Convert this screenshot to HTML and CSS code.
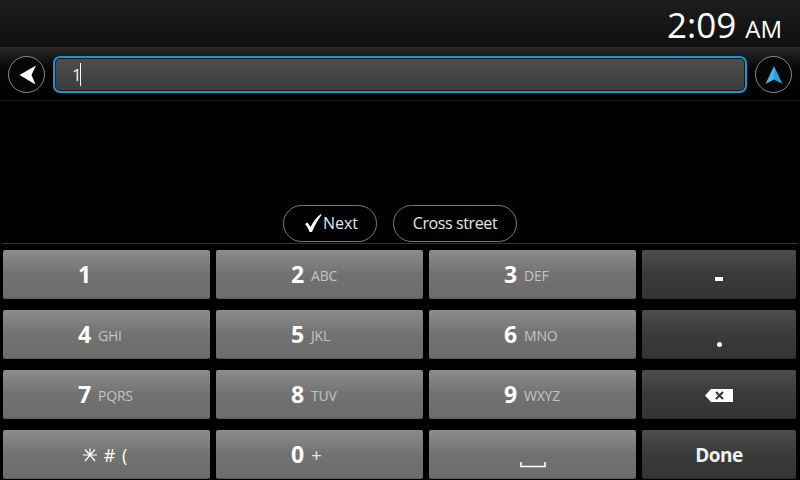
FILE: index.html
```html
<!DOCTYPE html>
<html>

<head lang="en">
    <meta charset="UTF-8">
    <title>Address entry</title>
    <link rel="stylesheet" href="styles.css">
</head>

<body>
    <div class="status-bar">
        <span class="clock">2:09</span>
        <span class="ampm">AM</span>
    </div>

    <div class="search-bar">
        <div class="round-btn">
            <svg width="22" height="22" viewBox="0 0 22 22">
                <path d="M3.5 11 L20 1.5 L15.5 11 L19.5 20.5 Z" fill="#fff"/>
            </svg>
        </div>
        <div class="search-input">
            <span class="search-text">1</span><span class="caret"></span>
        </div>
        <div class="round-btn">
            <svg width="22" height="22" viewBox="0 0 22 22">
                <path d="M11 2 L2.5 20 L11 15.5 Z" fill="#46b6ee"/>
                <path d="M11 2 L19.5 20 L11 15.5 Z" fill="#2f9fdc"/>
            </svg>
        </div>
    </div>

    <div class="results"></div>

    <div class="chips">
        <div class="chip chip-next">
            <svg width="18" height="20" viewBox="0 0 18 20">
                <path d="M1 11 L3.5 9.5 L6.5 14 C9 9 12.5 4 17 1 L17.5 2 C13.5 7 10.5 13 8 19 L5.5 19 C4.5 16 3 13 1 11 Z" fill="#fff"/>
            </svg>
            <span>Next</span>
        </div>
        <div class="chip chip-cross">Cross street</div>
    </div>

    <div class="keypad">
        <div class="key key-num"><b>1</b></div>
        <div class="key key-num"><b>2</b><small>ABC</small></div>
        <div class="key key-num"><b>3</b><small>DEF</small></div>
        <div class="key key-dark key-minus"><i></i></div>

        <div class="key key-num"><b>4</b><small>GHI</small></div>
        <div class="key key-num"><b>5</b><small>JKL</small></div>
        <div class="key key-num"><b>6</b><small>MNO</small></div>
        <div class="key key-dark key-dot"><i></i></div>

        <div class="key key-num"><b>7</b><small>PQRS</small></div>
        <div class="key key-num"><b>8</b><small>TUV</small></div>
        <div class="key key-num"><b>9</b><small>WXYZ</small></div>
        <div class="key key-dark key-back">
            <svg width="28" height="13" viewBox="0 0 28 13">
                <path d="M0 6.5 L6 0 H28 V13 H6 Z" fill="#fff"/>
                <path d="M11 3 L18 10 M18 3 L11 10" stroke="#333" stroke-width="2" fill="none"/>
            </svg>
        </div>

        <div class="key key-symbols">
            <svg width="16" height="14" viewBox="0 0 16 14">
                <path d="M1 7 H15 M8 0.5 V7 M3 1.5 L8 7 L13 1.5 M3 13 L8 7 L13 13" stroke="#fff" stroke-width="1.2" fill="none"/>
            </svg>
            <span># (</span>
        </div>
        <div class="key key-num"><b>0</b><small class="plus">+</small></div>
        <div class="key key-space">
            <svg width="26" height="6" viewBox="0 0 26 6">
                <path d="M1 0 V4.5 H25 V0" stroke="#fff" stroke-width="1.6" fill="none"/>
            </svg>
        </div>
        <div class="key key-dark key-done">Done</div>
    </div>
</body>

</html>
```

FILE: styles.css
```css
* {
    margin: 0;
    padding: 0;
    box-sizing: border-box;
}

html,
body {
    height: 480px;
    overflow: hidden;
}

body {
    width: 800px;
    display: flex;
    flex-direction: column;
    background-color: #000;
    color: #fff;
    font-family: "Open Sans", "Noto Sans", sans-serif;
}

.status-bar {
    height: 47px;
    display: flex;
    justify-content: flex-end;
    align-items: baseline;
    padding: 4px 18px 0 0;
    background: linear-gradient(#1d1d1d, #0f0f0f);
    line-height: 42px;
}

.clock {
    font-size: 35px;
}

.ampm {
    font-size: 24px;
    margin-left: 9px;
}

.search-bar {
    height: 54px;
    display: flex;
    align-items: flex-start;
    gap: 8px;
    padding: 9px 8px 0;
    background: linear-gradient(#2a2a2a, #060606 40%, #000);
    border-bottom: 1px solid #1c1c1c;
}

.round-btn {
    width: 37px;
    height: 37px;
    flex: none;
    display: flex;
    align-items: center;
    justify-content: center;
    border: 1px solid #8a8a8a;
    border-radius: 50%;
    background-color: #060606;
}

.search-input {
    flex: 1;
    height: 37px;
    display: flex;
    align-items: center;
    padding-left: 17px;
    border: 2px solid #1a94d0;
    border-radius: 7px;
    box-shadow: inset 0 0 0 1px #1a1a1a;
    background: linear-gradient(#4d4d4d, #3c3c3c);
    font-size: 17px;
}

.search-text {
    color: #f0f0f0;
}

.caret {
    width: 1px;
    height: 23px;
    margin-left: -2px;
    background-color: #fff;
}

.results {
    flex: 1;
}

.chips {
    height: 38px;
    display: flex;
    justify-content: center;
    gap: 16px;
}

.chip {
    height: 37px;
    display: flex;
    align-items: center;
    justify-content: center;
    padding-bottom: 2px;
    border: 1px solid #7a7a7a;
    border-radius: 19px;
    font-size: 16px;
    letter-spacing: -0.4px;
    color: #e6e6e6;
}

.chip-next {
    width: 94px;
    gap: 1px;
    padding-left: 2px;
    letter-spacing: 0;
}

.chip-cross {
    width: 124px;
}

.keypad {
    display: grid;
    grid-template-columns: 207px 207px 207px 154px;
    grid-auto-rows: 49px;
    gap: 11px 6px;
    margin: 0 2px;
    padding: 6px 2px 1px 1px;
    border-top: 1px solid #333;
}

.key {
    display: flex;
    align-items: center;
    justify-content: center;
    border-radius: 2px;
    border-bottom: 1px solid #5a5a5a;
    background: linear-gradient(#8c8c8c, #727272 50%, #6c6c6c);
}

.key-num {
    justify-content: flex-start;
    padding-left: 75px;
}

.key-num b {
    width: 20px;
    margin-top: 1px;
    font-size: 23px;
    line-height: 1;
}

.key-num small {
    margin-top: 2px;
    font-size: 14px;
    letter-spacing: -0.2px;
    color: #c4c4c4;
}

.key-num small.plus {
    margin-top: 1px;
    font-size: 19px;
    color: #e8e8e8;
}

.key-dark {
    background: linear-gradient(#4c4e4d, #393b3a 50%, #333534);
    border-bottom-color: #2a2a2a;
}

.key-minus i {
    width: 8px;
    height: 4px;
    margin-top: 9px;
    background-color: #fff;
}

.key-dot i {
    width: 5px;
    height: 5px;
    margin-top: 20px;
    border-radius: 50%;
    background-color: #fff;
}

.key-back svg {
    margin: 2px 0 0 -1px;
}

.key-symbols {
    gap: 6px;
    padding: 2px 3px 0 0;
    font-size: 18px;
    letter-spacing: 1px;
}

.key-space {
    align-items: flex-end;
    padding-bottom: 10px;
}

.key-done {
    padding-top: 2px;
    font-size: 19px;
    font-weight: 700;
    letter-spacing: -0.5px;
    color: #f0f0f0;
}
```
